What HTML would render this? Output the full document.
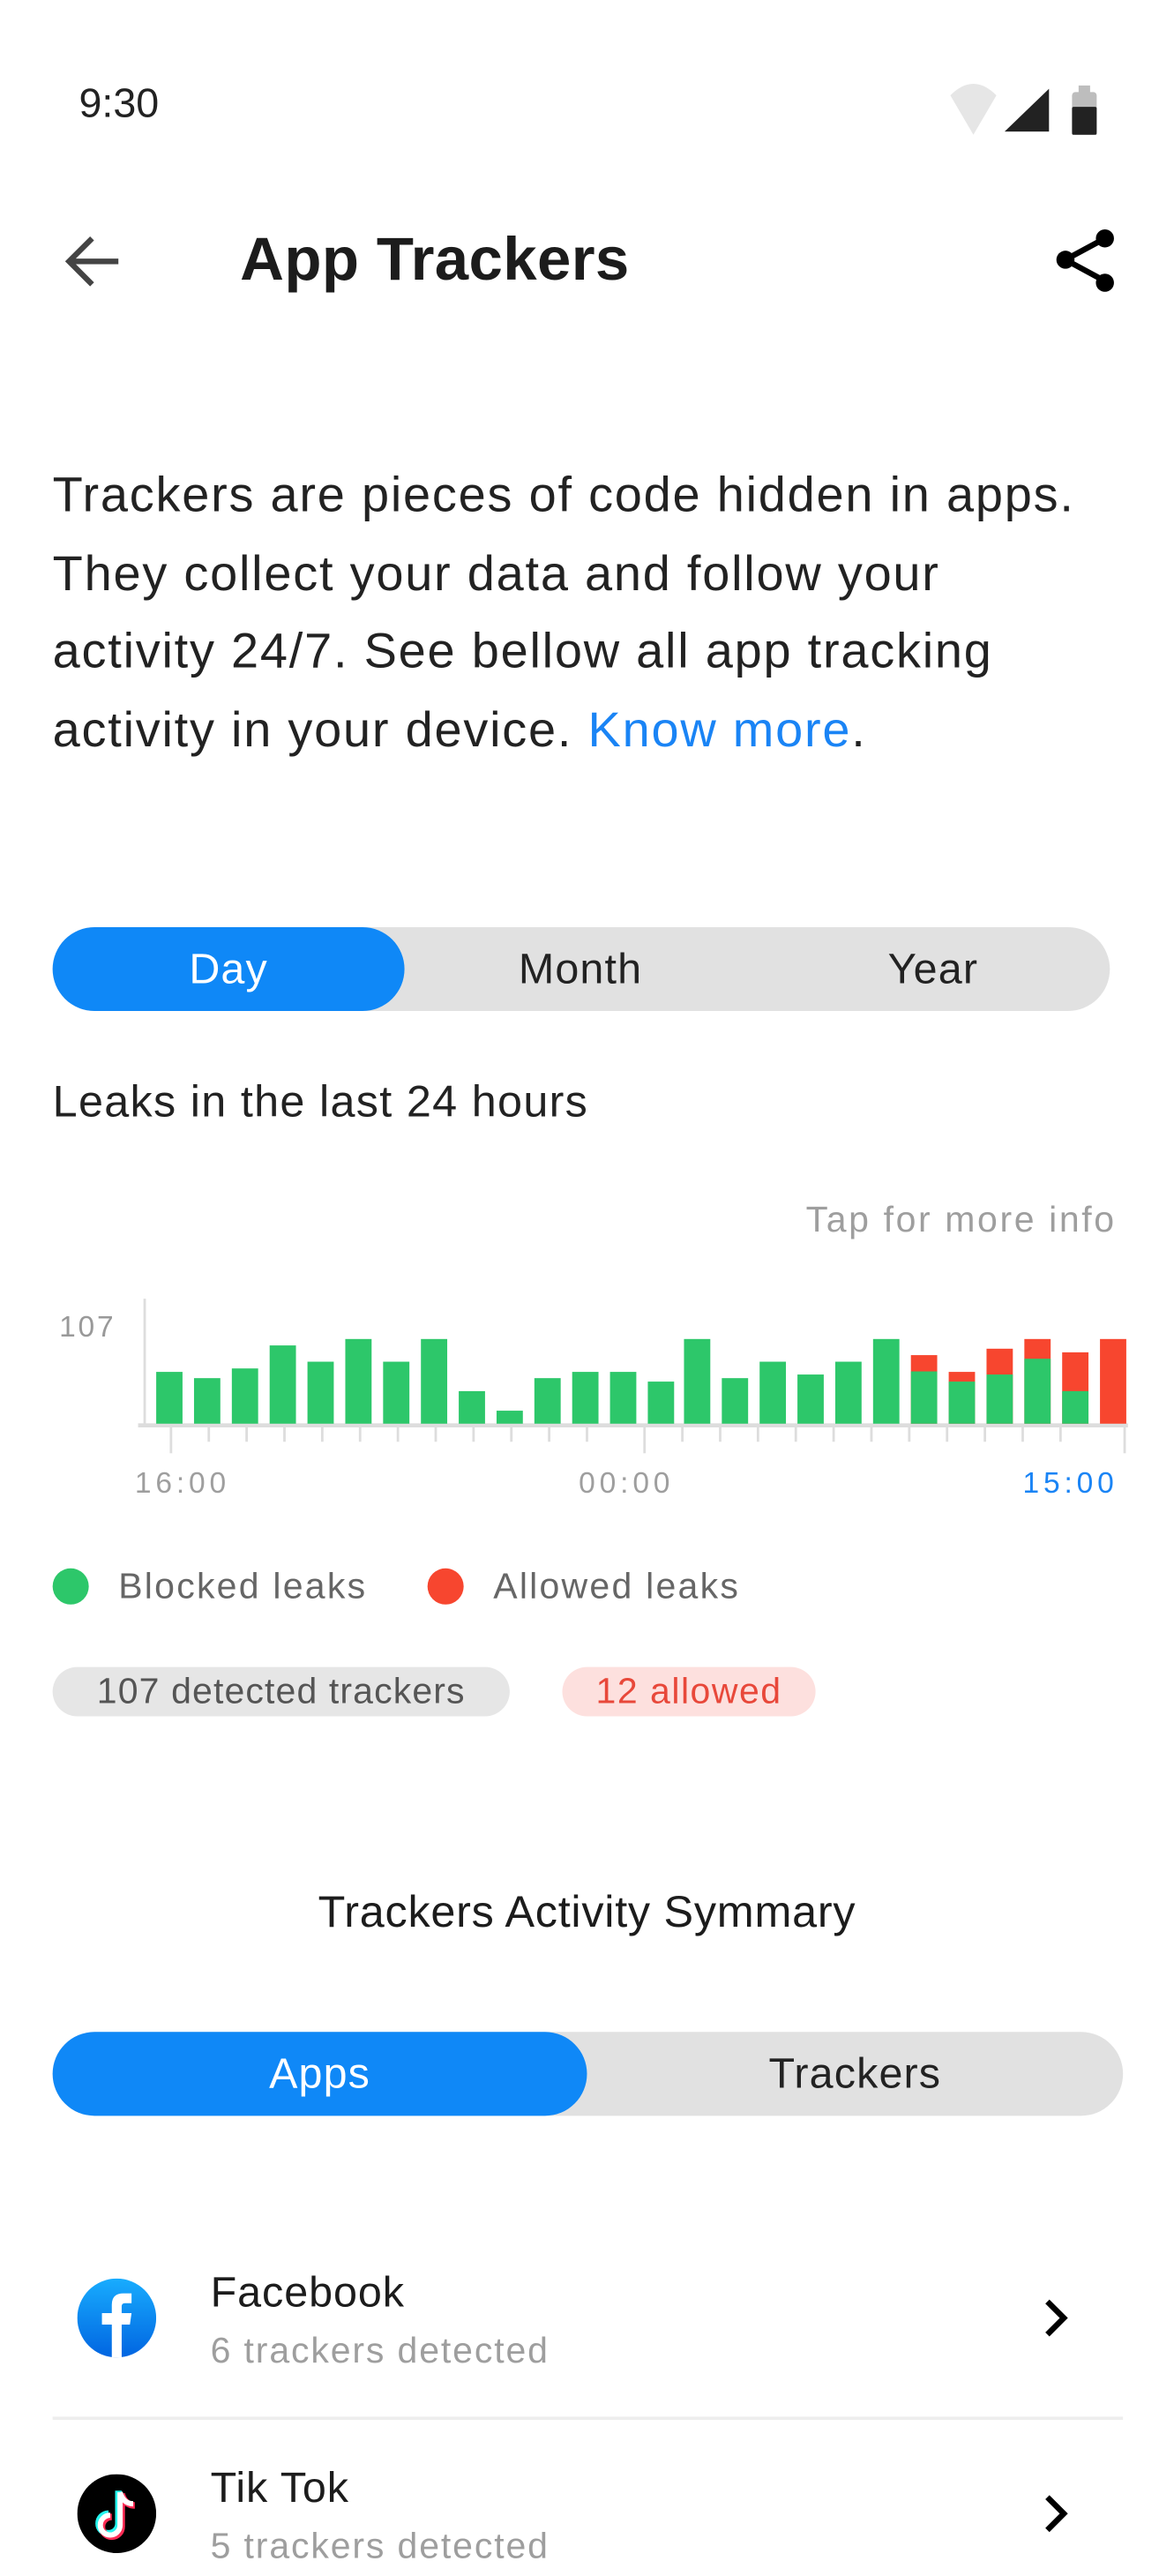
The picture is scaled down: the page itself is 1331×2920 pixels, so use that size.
<!DOCTYPE html>
<html><head><meta charset="utf-8">
<style>
html,body{margin:0;padding:0;background:#fff;}
body{width:1331px;height:2920px;overflow:hidden;position:relative;font-family:"Liberation Sans",sans-serif;}
#w{position:absolute;left:0;top:0;width:714px;height:1567px;transform:scale(1.8641,1.8635);transform-origin:0 0;}
.a{position:absolute;white-space:nowrap;}
.seg{position:absolute;background:#e1e1e1;border-radius:26px;}
.on{position:absolute;background:#0f88f7;border-radius:26px;top:0;bottom:0;}
.st{position:absolute;top:0;bottom:0;display:flex;align-items:center;justify-content:center;font-size:26px;color:#222;letter-spacing:0.6px;}
</style></head><body><div id="w">
<div class="a" style="left:48px;top:49px;font-size:25px;color:#222;">9:30</div>
<svg class="a" style="left:570px;top:48px" width="100" height="36" viewBox="0 0 100 36">
<path d="M8 10 Q22 -4 36 10 L22 34 Z" fill="#e6e6e6"/>
<path d="M41 32 L68 6 L68 32 Z" fill="#222"/>
<rect x="82" y="8" width="15" height="26" rx="2" fill="#bdbdbd"/><rect x="86" y="4" width="7" height="5" fill="#bdbdbd"/>
<rect x="82" y="17" width="15" height="17" rx="1" fill="#222"/>
</svg>
<svg class="a" style="left:36px;top:142px" width="40" height="34" viewBox="0 0 40 34">
<path d="M20 3 L6 17 L20 31 M6 17 L36 17" stroke="#444" stroke-width="3.4" fill="none"/>
</svg>
<div class="a" style="left:146px;top:137px;font-size:37px;color:#1c1c1c;font-weight:bold;letter-spacing:0.2px">App Trackers</div>
<svg class="a" style="left:638px;top:137px" width="44" height="44" viewBox="0 0 44 44">
<path d="M34 8 L10 21 L34 34" stroke="#000" stroke-width="3.5" fill="none"/>
<circle cx="34" cy="8" r="5.5"/><circle cx="10" cy="21" r="5.5"/><circle cx="34" cy="35" r="5.5"/>
</svg>
<div class="a" style="left:32px;top:278px;font-size:30px;line-height:47.7px;color:#222;letter-spacing:0.95px">Trackers are pieces of code hidden in apps.<br>They collect your data and follow your<br>activity 24/7. See bellow all app tracking<br>activity in your device. <span style="color:#1a84f5">Know more</span>.</div>

<div class="seg" style="left:32px;top:564px;width:643px;height:51px;">
<div class="on" style="left:0;width:214px"></div>
<div class="st" style="left:0;width:214px;color:#fff">Day</div>
<div class="st" style="left:214px;width:214px">Month</div>
<div class="st" style="left:428px;width:215px">Year</div>
</div>
<div class="a" style="left:32px;top:655px;font-size:27px;color:#222;letter-spacing:0.7px">Leaks in the last 24 hours</div>
<div class="a" style="right:35px;top:729px;font-size:22px;color:#9e9e9e;letter-spacing:1.4px">Tap for more info</div>

<svg class="a" style="left:0;top:780px" width="714" height="140" viewBox="0 780 714 140">
<text x="36" y="813" font-size="18" fill="#999" font-family="Liberation Sans" letter-spacing="1.5">107</text>
<line x1="88" y1="790" x2="88" y2="866" stroke="#ddd" stroke-width="1.5"/>
<line x1="84" y1="867" x2="686" y2="867" stroke="#ddd" stroke-width="2.5"/>
<g stroke="#ddd" stroke-width="1.5">
<line x1="104" y1="868" x2="104" y2="884"/><line x1="392" y1="868" x2="392" y2="884"/><line x1="684" y1="868" x2="684" y2="884"/>
<line x1="127" y1="868" x2="127" y2="877"/><line x1="150" y1="868" x2="150" y2="877"/><line x1="173" y1="868" x2="173" y2="877"/><line x1="196" y1="868" x2="196" y2="877"/><line x1="219" y1="868" x2="219" y2="877"/><line x1="242" y1="868" x2="242" y2="877"/><line x1="265" y1="868" x2="265" y2="877"/><line x1="288" y1="868" x2="288" y2="877"/><line x1="311" y1="868" x2="311" y2="877"/><line x1="334" y1="868" x2="334" y2="877"/><line x1="357" y1="868" x2="357" y2="877"/><line x1="415" y1="868" x2="415" y2="877"/><line x1="438" y1="868" x2="438" y2="877"/><line x1="461" y1="868" x2="461" y2="877"/><line x1="484" y1="868" x2="484" y2="877"/><line x1="507" y1="868" x2="507" y2="877"/><line x1="530" y1="868" x2="530" y2="877"/><line x1="553" y1="868" x2="553" y2="877"/><line x1="576" y1="868" x2="576" y2="877"/><line x1="599" y1="868" x2="599" y2="877"/><line x1="622" y1="868" x2="622" y2="877"/><line x1="645" y1="868" x2="645" y2="877"/>
</g>
<g fill="#2dc76a">
<rect x="95" y="834.5" width="16" height="31.5"/>
<rect x="118" y="838.3" width="16" height="27.7"/>
<rect x="141" y="832.4" width="16" height="33.6"/>
<rect x="164" y="818.4" width="16" height="47.6"/>
<rect x="187" y="828.3" width="16" height="37.7"/>
<rect x="210" y="814.5" width="16" height="51.5"/>
<rect x="233" y="828.3" width="16" height="37.7"/>
<rect x="256" y="814.5" width="16" height="51.5"/>
<rect x="279" y="846.2" width="16" height="19.8"/>
<rect x="302" y="858.1" width="16" height="7.9"/>
<rect x="325" y="838.3" width="16" height="27.7"/>
<rect x="348" y="834.5" width="16" height="31.5"/>
<rect x="371" y="834.5" width="16" height="31.5"/>
<rect x="394" y="840.4" width="16" height="25.6"/>
<rect x="416" y="814.5" width="16" height="51.5"/>
<rect x="439" y="838.3" width="16" height="27.7"/>
<rect x="462" y="828.3" width="16" height="37.7"/>
<rect x="485" y="836.1" width="16" height="29.9"/>
<rect x="508" y="828.3" width="16" height="37.7"/>
<rect x="531" y="814.5" width="16" height="51.5"/>
</g>
<rect x="554" y="824.3" width="16" height="41.7" fill="#f7462f"/><rect x="554" y="834.2" width="16" height="31.8" fill="#2dc76a"/>
<rect x="577" y="834.5" width="16" height="31.5" fill="#f7462f"/><rect x="577" y="840.4" width="16" height="25.6" fill="#2dc76a"/>
<rect x="600" y="820.4" width="16" height="45.6" fill="#f7462f"/><rect x="600" y="836.1" width="16" height="29.9" fill="#2dc76a"/>
<rect x="623" y="814.5" width="16" height="51.5" fill="#f7462f"/><rect x="623" y="826.5" width="16" height="39.5" fill="#2dc76a"/>
<rect x="646" y="822.6" width="16" height="43.4" fill="#f7462f"/><rect x="646" y="846.2" width="16" height="19.8" fill="#2dc76a"/>
<rect x="669" y="814.5" width="16" height="51.5" fill="#f7462f"/>
<g font-family="Liberation Sans" font-size="18" letter-spacing="2.6">
<text x="82" y="908" fill="#9e9e9e">16:00</text>
<text x="352" y="908" fill="#9e9e9e">00:00</text>
<text x="622" y="908" fill="#1a84f5">15:00</text>
</g>
</svg>

<div class="a" style="left:32px;top:954px;width:22px;height:22px;border-radius:50%;background:#2dc76a"></div>
<div class="a" style="left:72px;top:952px;font-size:22px;color:#666;letter-spacing:1.2px">Blocked leaks</div>
<div class="a" style="left:260px;top:954px;width:22px;height:22px;border-radius:50%;background:#f7462f"></div>
<div class="a" style="left:300px;top:952px;font-size:22px;color:#666;letter-spacing:1.2px">Allowed leaks</div>

<div class="a" style="left:32px;top:1014px;width:278px;height:30px;border-radius:15px;background:#e6e6e6;font-size:22px;line-height:30px;text-align:center;color:#555;letter-spacing:0.6px">107 detected trackers</div>
<div class="a" style="left:342px;top:1014px;width:154px;height:30px;border-radius:15px;background:#fde0de;font-size:22px;line-height:30px;text-align:center;color:#e8483a;letter-spacing:0.8px">12 allowed</div>

<div class="a" style="left:0;width:714px;text-align:center;top:1148px;font-size:27px;color:#1c1c1c;letter-spacing:0.4px">Trackers Activity Symmary</div>

<div class="seg" style="left:32px;top:1236px;width:651px;height:51px;">
<div class="on" style="left:0;width:325px"></div>
<div class="st" style="left:0;width:325px;color:#fff">Apps</div>
<div class="st" style="left:325px;width:326px">Trackers</div>
</div>

<svg class="a" style="left:47px;top:1386px" width="48" height="48" viewBox="0 0 48 48">
<defs><linearGradient id="fb" x1="0" y1="0" x2="0" y2="1"><stop offset="0" stop-color="#18acfe"/><stop offset="1" stop-color="#0165e1"/></linearGradient></defs>
<circle cx="24" cy="24" r="24" fill="url(#fb)"/>
<path d="M21 48 V28 H15 V21 H21 V16 Q21 9 28 9 H33 V15 H29 Q27 15 27 17 V21 H33 L32 28 H27 V48 Z" fill="#fff"/>
</svg>
<div class="a" style="left:128px;top:1379px;font-size:26px;color:#1c1c1c;letter-spacing:0.5px">Facebook</div>
<div class="a" style="left:128px;top:1417px;font-size:22px;color:#9e9e9e;letter-spacing:1px">6 trackers detected</div>
<svg class="a" style="left:632px;top:1397px" width="22" height="26" viewBox="0 0 22 26"><path d="M5 3 L15 13 L5 23" stroke="#000" stroke-width="3.5" fill="none"/></svg>
<div class="a" style="left:32px;top:1470px;width:651px;height:2px;background:#eee"></div>

<svg class="a" style="left:47px;top:1505px" width="48" height="48" viewBox="0 0 48 48">
<circle cx="24" cy="24" r="24" fill="#000"/>
<path d="M25 10 V30 A6 6 0 1 1 19 24" stroke="#25f4ee" stroke-width="4" fill="none"/>
<path d="M27 12 V32 A6 6 0 1 1 21 26 M27 12 Q29 19 35 19" stroke="#fe2c55" stroke-width="4" fill="none"/>
<path d="M26 11 V31 A6 6 0 1 1 20 25 M26 11 Q28 18 34 18" stroke="#fff" stroke-width="3.2" fill="none"/>
</svg>
<div class="a" style="left:128px;top:1498px;font-size:26px;color:#1c1c1c;letter-spacing:0.5px">Tik Tok</div>
<div class="a" style="left:128px;top:1536px;font-size:22px;color:#9e9e9e;letter-spacing:1px">5 trackers detected</div>
<svg class="a" style="left:632px;top:1516px" width="22" height="26" viewBox="0 0 22 26"><path d="M5 3 L15 13 L5 23" stroke="#000" stroke-width="3.5" fill="none"/></svg>
</div></body></html>
